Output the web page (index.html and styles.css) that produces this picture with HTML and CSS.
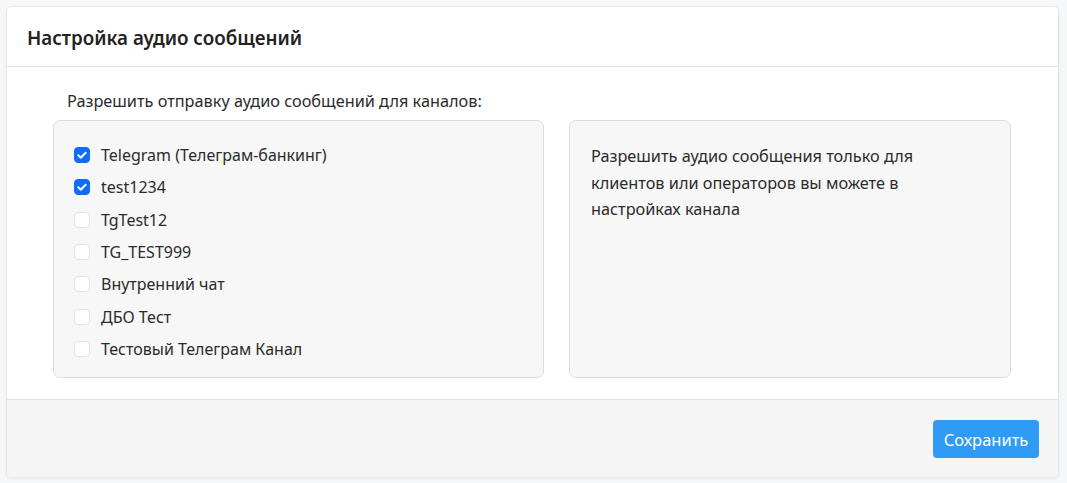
FILE: index.html
```html
<!DOCTYPE html>
<html lang="ru">
<head>
<meta charset="utf-8">
<title>Настройка аудио сообщений</title>
<link rel="stylesheet" href="styles.css">
</head>
<body>
<div class="card">
  <div class="card-header">
    <h2 class="title">Настройка аудио сообщений</h2>
  </div>
  <div class="card-body">
    <div class="label">Разрешить отправку аудио сообщений для каналов:</div>
    <div class="cols">
      <div class="panel channels">
        <div class="row"><span class="cb checked"><svg viewBox="0 0 16 16" width="16" height="16"><path d="M4.3 8.3l2.4 2.4 5-5" fill="none" stroke="#fff" stroke-width="2" stroke-linecap="round" stroke-linejoin="round"/></svg></span><span class="name">Telegram (Телеграм-банкинг)</span></div>
        <div class="row"><span class="cb checked"><svg viewBox="0 0 16 16" width="16" height="16"><path d="M4.3 8.3l2.4 2.4 5-5" fill="none" stroke="#fff" stroke-width="2" stroke-linecap="round" stroke-linejoin="round"/></svg></span><span class="name">test1234</span></div>
        <div class="row"><span class="cb"></span><span class="name">TgTest12</span></div>
        <div class="row"><span class="cb"></span><span class="name">TG_TEST999</span></div>
        <div class="row"><span class="cb"></span><span class="name">Внутренний чат</span></div>
        <div class="row"><span class="cb"></span><span class="name">ДБО Тест</span></div>
        <div class="row"><span class="cb"></span><span class="name">Тестовый Телеграм Канал</span></div>
      </div>
      <div class="panel info">
        <p>Разрешить аудио сообщения только для клиентов или операторов вы можете в настройках канала</p>
      </div>
    </div>
  </div>
  <div class="card-footer">
    <button class="btn">Сохранить</button>
  </div>
</div>
</body>
</html>
```
FILE: styles.css
```css
html, body {
  margin: 0;
  padding: 0;
  background: #f6f7f9;
}
body {
  padding: 6px 8px 5px 6px;
  font-family: "Noto Sans", "Open Sans", sans-serif;
  color: #2b2b2b;
}
.card {
  background: #fff;
  border: 1px solid #e6e7ea;
  border-radius: 5px;
  box-shadow: 0 1px 3px rgba(0,0,0,0.06);
  overflow: hidden;
}
.card-header {
  height: 59px;
  border-bottom: 1px solid #e4e5e8;
  display: flex;
  align-items: center;
  padding: 2px 20px 0;
  box-sizing: border-box;
  height: 60px;
}
.title {
  margin: 0;
  font-size: 18.8px;
  font-weight: 600;
  color: #222;
}
.card-body {
  padding: 23px 47px 21px 46px;
}
.label {
  font-size: 16.3px;
  line-height: 22px;
  padding-left: 14px;
  margin-bottom: 8px;
  color: #2b2b2b;
}
.cols {
  display: grid;
  grid-template-columns: 491px 442px;
  column-gap: 25px;
}
.panel {
  background: #f7f7f7;
  border: 1px solid #dcdde0;
  border-radius: 7px;
}
.channels {
  padding: 18px 20px 12px 20px;
}
.row {
  height: 32.33px;
  display: flex;
  align-items: center;
}
.cb {
  width: 16px;
  height: 16px;
  box-sizing: border-box;
  border: 1px solid #dee2e6;
  border-radius: 4px;
  background: #fff;
  margin-right: 11px;
  flex: none;
  display: flex;
}
.cb.checked {
  background: #0d6efd;
  border-color: #0d6efd;
}
.cb svg {
  margin: -1px;
}
.name {
  font-size: 16px;
  color: #2b2b2b;
}
.info {
  padding: 22px 21px;
}
.info p {
  margin: 0;
  font-size: 16.3px;
  line-height: 26.5px;
  max-width: 345px;
  color: #2b2b2b;
}
.card-footer {
  background: #f5f5f5;
  border-top: 1px solid #e4e5e8;
  padding: 20px 19px 19px 20px;
  display: flex;
  justify-content: flex-end;
}
.btn {
  width: 106px;
  height: 38px;
  background: #2f9bf4;
  color: #fff;
  border: none;
  border-radius: 4px;
  font-family: "Noto Sans", "Open Sans", sans-serif;
  font-size: 16.5px;
  padding: 0;
}
```
